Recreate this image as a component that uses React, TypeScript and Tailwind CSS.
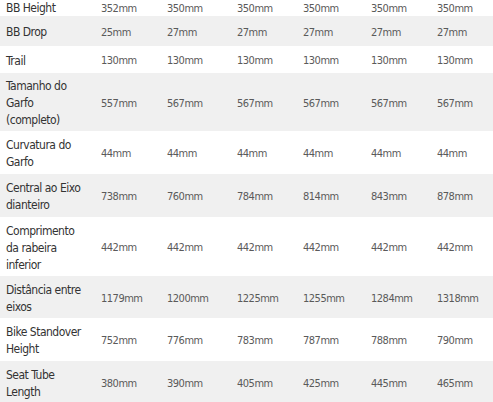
import React from "react";

type Row = { label: string[]; values: string[]; h: string; bg: boolean };

const rows: Row[] = [
  { label: ["BB Height"], values: ["352mm", "350mm", "350mm", "350mm", "350mm", "350mm"], h: "h-[16px]", bg: false },
  { label: ["BB Drop"], values: ["25mm", "27mm", "27mm", "27mm", "27mm", "27mm"], h: "h-[30px]", bg: true },
  { label: ["Trail"], values: ["130mm", "130mm", "130mm", "130mm", "130mm", "130mm"], h: "h-[27px]", bg: false },
  { label: ["Tamanho do", "Garfo", "(completo)"], values: ["557mm", "567mm", "567mm", "567mm", "567mm", "567mm"], h: "h-[58px]", bg: true },
  { label: ["Curvatura do", "Garfo"], values: ["44mm", "44mm", "44mm", "44mm", "44mm", "44mm"], h: "h-[43px]", bg: false },
  { label: ["Central ao Eixo", "dianteiro"], values: ["738mm", "760mm", "784mm", "814mm", "843mm", "878mm"], h: "h-[43px]", bg: true },
  { label: ["Comprimento", "da rabeira", "inferior"], values: ["442mm", "442mm", "442mm", "442mm", "442mm", "442mm"], h: "h-[59px]", bg: false },
  { label: ["Distância entre", "eixos"], values: ["1179mm", "1200mm", "1225mm", "1255mm", "1284mm", "1318mm"], h: "h-[42px]", bg: true },
  { label: ["Bike Standover", "Height"], values: ["752mm", "776mm", "783mm", "787mm", "788mm", "790mm"], h: "h-[43px]", bg: false },
  { label: ["Seat Tube", "Length"], values: ["380mm", "390mm", "405mm", "425mm", "445mm", "465mm"], h: "h-[43px]", bg: true },
];

export default function App() {
  return (
    <div
      className="w-[493px] h-[402px] overflow-hidden bg-white"
      style={{ fontFamily: '"DejaVu Sans Condensed", "Liberation Sans Narrow", "Roboto", sans-serif' }}
    >
      {rows.map((r, i) => (
        <div
          key={i}
          className={`grid grid-cols-[95px_66px_70px_66px_68px_66px_1fr] items-center ${r.h} ${i > 0 ? "pt-[3px]" : ""} ${r.bg ? "bg-[#f0f0f0]" : "bg-white"}`}
        >
          <div className="pl-[6px] text-[12px] leading-[17px] tracking-[-0.5px] text-[#333333]">
            {r.label.map((l, j) => (
              <div key={j} className="whitespace-nowrap">{l}</div>
            ))}
          </div>
          {r.values.map((v, j) => (
            <div key={j} className="pl-[6px] text-[11px] leading-[16px] tracking-[-0.5px] text-[#5a5a5a] whitespace-nowrap">
              {v}
            </div>
          ))}
        </div>
      ))}
    </div>
  );
}
